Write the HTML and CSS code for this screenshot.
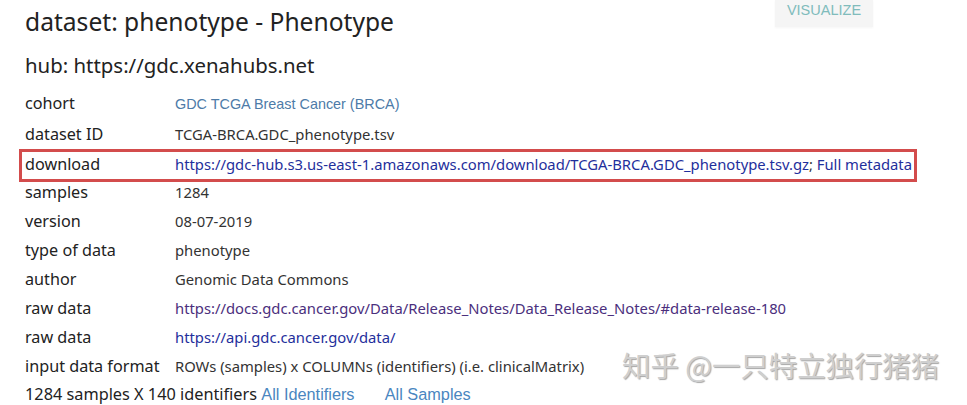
FILE: index.html
```html
<!DOCTYPE html>
<html lang="en">
<head>
    <meta charset="UTF-8">
    <title>dataset: phenotype - Phenotype</title>
    <link rel="stylesheet" href="styles.css">
</head>
<body>
    <div class="page">
        <header class="top">
            <h1>dataset: phenotype - Phenotype</h1>
            <button class="visualize">VISUALIZE</button>
        </header>
        <h2>hub: https://gdc.xenahubs.net</h2>

        <div class="meta">
            <div class="row first">
                <span class="label">cohort</span>
                <a class="cohort" href="#">GDC TCGA Breast Cancer (BRCA)</a>
            </div>
            <div class="row">
                <span class="label">dataset ID</span>
                <span class="value">TCGA-BRCA.GDC_phenotype.tsv</span>
            </div>
            <!-- fila marcada en rojo -->
            <div class="row marked">
                <span class="label">download</span>
                <span class="value"><a class="link" href="#">https://gdc-hub.s3.us-east-1.amazonaws.com/download/TCGA-BRCA.GDC_phenotype.tsv.gz</a>; <a class="link" href="#">Full metadata</a></span>
            </div>
            <div class="row">
                <span class="label">samples</span>
                <span class="value">1284</span>
            </div>
            <div class="row">
                <span class="label">version</span>
                <span class="value">08-07-2019</span>
            </div>
            <div class="row">
                <span class="label">type of data</span>
                <span class="value">phenotype</span>
            </div>
            <div class="row">
                <span class="label">author</span>
                <span class="value">Genomic Data Commons</span>
            </div>
            <div class="row">
                <span class="label">raw data</span>
                <span class="value"><a class="link visited" href="#">https://docs.gdc.cancer.gov/Data/Release_Notes/Data_Release_Notes/#data-release-180</a></span>
            </div>
            <div class="row">
                <span class="label">raw data</span>
                <span class="value"><a class="link" href="#">https://api.gdc.cancer.gov/data/</a></span>
            </div>
            <div class="row">
                <span class="label">input data format</span>
                <span class="value">ROWs (samples) x COLUMNs (identifiers) (i.e. clinicalMatrix)</span>
            </div>
        </div>

        <div class="summary">
            1284 samples X 140 identifiers
            <a class="soft" href="#">All Identifiers</a>
            <a class="soft samples" href="#">All Samples</a>
        </div>
    </div>

    <div class="watermark">知乎 @一只特立独行猪猪</div>
</body>
</html>
```

FILE: styles.css
```css
/* General */
body {
    margin: 0;
    padding: 0;
    background: #fff;
    color: #222;
    font-family: 'Noto Sans', 'Open Sans', sans-serif;
    overflow: hidden;
}

.page {
    padding: 0 94px 0 25px;
}

/* Encabezado */
.top {
    display: flex;
    align-items: flex-start;
    justify-content: space-between;
}

h1 {
    margin: 5px 0 0;
    font-size: 24.6px;
    font-weight: 400;
    line-height: 34px;
    color: #222;
}

.visualize {
    background-color: #f5f5f5;
    border: none;
    color: #80bcbc;
    font-family: 'Liberation Sans', Arial, sans-serif;
    font-size: 14.5px;
    line-height: 16px;
    padding: 2px 0 9px;
    height: 27px;
    width: 98px;
    box-shadow: 0 1px 2px rgba(0, 0, 0, 0.04);
}

h2 {
    margin: 12px 0 0;
    font-size: 20.4px;
    font-weight: 400;
    line-height: 28px;
    color: #222;
}

/* Tabla de metadatos */
.meta {
    margin-top: 13px;
}

.row {
    display: flex;
    align-items: baseline;
    height: 29px;
    white-space: nowrap;
}

.row.first {
    height: 31px;
}

.label {
    width: 150px;
    flex-shrink: 0;
    font-size: 16.2px;
    color: #222;
}

.value {
    font-size: 14.8px;
    color: #333;
}

.cohort {
    font-family: 'Liberation Sans', Arial, sans-serif;
    font-size: 14.4px;
    color: #4d7ba8;
    text-decoration: none;
}

.link {
    color: #1f2f9c;
    text-decoration: none;
}

.link.visited {
    color: #4b2f7d;
}

.row.marked {
    border: 3px solid #d34c4c;
    margin: -3px 0 -1px -6px;
    padding: 0 2px 4px 3px;
    width: fit-content;
    height: 23px;
    align-items: center;
}

.summary {
    margin-top: -1px;
    font-size: 16.3px;
    color: #222;
    line-height: 22px;
    white-space: nowrap;
}

.soft {
    font-family: 'Liberation Sans', Arial, sans-serif;
    color: #4a86c0;
    text-decoration: none;
}

.soft.samples {
    margin-left: 26px;
}

/* Marca de agua */
.watermark {
    position: absolute;
    left: 622px;
    top: 344px;
    font-family: 'Noto Sans CJK SC', sans-serif;
    font-size: 28.4px;
    color: #cfcfcf;
    text-shadow: 1px 1px 1px rgba(0, 0, 0, 0.35);
    white-space: nowrap;
}
```
